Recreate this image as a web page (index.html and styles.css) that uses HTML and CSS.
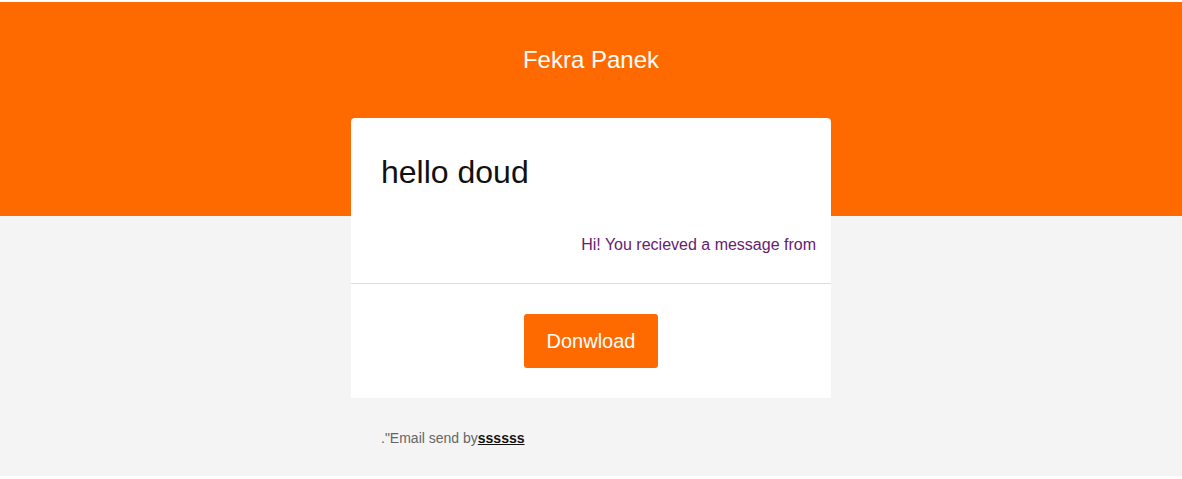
FILE: index.html
```html
<!DOCTYPE html>
<html lang="en">
<head>
<meta charset="utf-8">
<title>Fekra Panek</title>
<link rel="stylesheet" href="styles.css">
</head>
<body>
<div class="mail">
  <header class="brand">
    <div class="brand-name">Fekra Panek</div>
  </header>
  <div class="card-row">
    <div class="card">
      <div class="card-head">
        <h1 class="card-title">hello doud</h1>
      </div>
      <div class="card-msg">Hi! You recieved a message from</div>
      <div class="card-action">
        <a class="btn" href="#">Donwload</a>
      </div>
    </div>
  </div>
  <div class="foot-row">
    <p class="foot">."Email send by<a class="foot-link" href="#">ssssss</a></p>
  </div>
</div>
</body>
</html>
```

FILE: styles.css
```css
html, body {
  margin: 0;
  padding: 0;
  background: #ffffff;
}
body {
  padding-top: 2px;
  font-family: "Liberation Sans", Arial, sans-serif;
}
.mail {
  background: #f4f4f4;
}
.brand {
  background: #ff6a00;
  padding: 44px 10px;
  text-align: center;
}
.brand-name {
  color: #ffffff;
  font-size: 24px;
  line-height: 28px;
}
.card-row {
  display: flex;
  justify-content: center;
  background: linear-gradient(#ff6a00 0, #ff6a00 98px, #f4f4f4 98px);
}
.card {
  width: 480px;
  background: #ffffff;
  border-radius: 4px 4px 0 0;
}
.card-head {
  padding: 36px 30px 0;
}
.card-title {
  margin: 0;
  font-size: 32px;
  line-height: 37px;
  font-weight: 400;
  color: #111111;
}
.card-msg {
  padding: 45px 15px 29px;
  text-align: right;
  font-size: 16px;
  line-height: 18px;
  color: #66226f;
  border-bottom: 1px solid #dddddd;
}
.card-action {
  padding: 30px 0;
  display: flex;
  justify-content: center;
}
.btn {
  display: block;
  background: #ff6a00;
  color: #ffffff;
  text-decoration: none;
  font-size: 20px;
  line-height: 24px;
  padding: 15px 23px;
  border-radius: 3px;
}
.foot-row {
  display: flex;
  justify-content: center;
  padding: 30px 0 28px;
}
.foot {
  width: 420px;
  margin: 0;
  font-size: 14px;
  line-height: 20px;
  color: #666666;
}
.foot-link {
  color: #111111;
  font-weight: 700;
  text-decoration: underline;
}
```
